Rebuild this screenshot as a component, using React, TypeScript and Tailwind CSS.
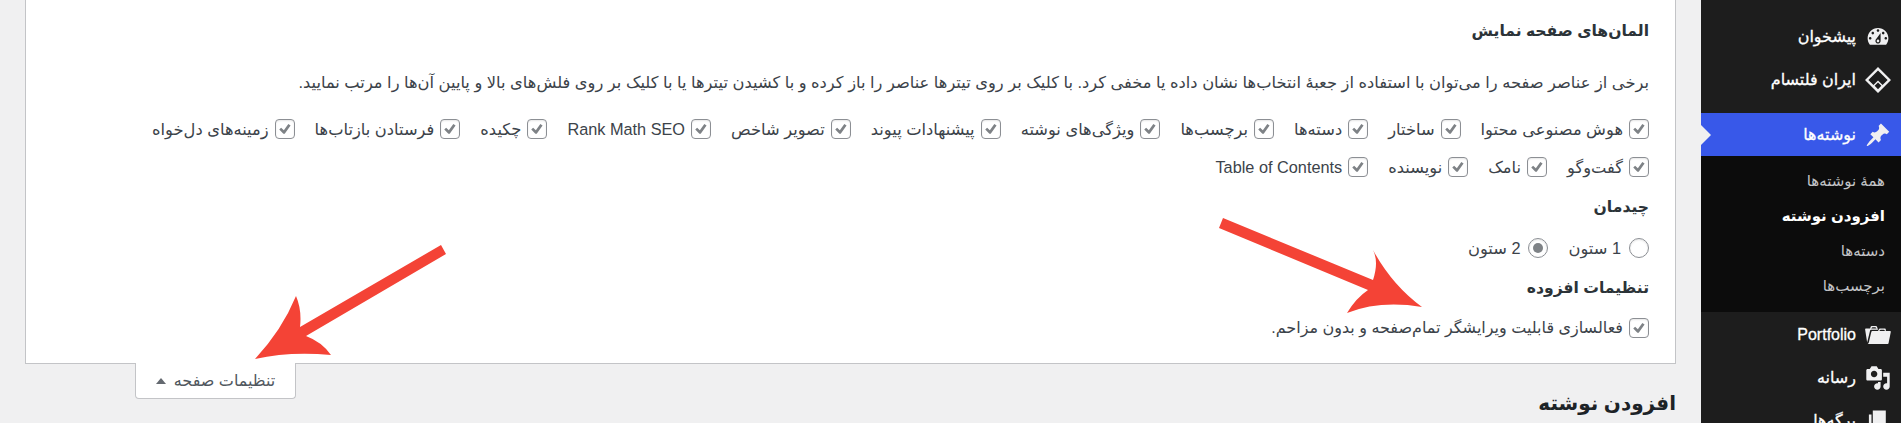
import React from 'react'

const font = "font-['Liberation_Sans','DejaVu_Sans',sans-serif]"

const rowOne = ['هوش مصنوعی محتوا', 'ساختار', 'دسته‌ها', 'برچسب‌ها', 'ویژگی‌های نوشته', 'پیشنهادات پیوند', 'تصویر شاخص', 'Rank Math SEO', 'چکیده', 'فرستادن بازتاب‌ها', 'زمینه‌های دل‌خواه']
const rowTwo = ['گفت‌وگو', 'نامک', 'نویسنده', 'Table of Contents']

const Check = ({ label }: { label: string }) => (
  <label className="flex items-center gap-[6px]">
    <span className="flex h-5 w-5 shrink-0 items-center justify-center rounded-[4px] border border-[#8c8f94] bg-white shadow-[inset_0_1px_2px_rgba(0,0,0,0.1)]">
      <svg viewBox="0 0 20 20" className="h-[18px] w-[18px] fill-[#7e8286]">
        <path d="M3.6 10.6l2.1-2 3 2.9 5-7 2.5 1.7-6.5 9.2H8.2z" />
      </svg>
    </span>
    <span>{label}</span>
  </label>
)

const Radio = ({ label, on }: { label: string; on?: boolean }) => (
  <label className="flex items-center gap-[8px]">
    <span className="flex h-5 w-5 shrink-0 items-center justify-center rounded-full border border-[#8c8f94] bg-white shadow-[inset_0_1px_2px_rgba(0,0,0,0.1)]">
      {on && <span className="h-[10px] w-[10px] rounded-full bg-[#7e8286]" />}
    </span>
    <span>{label}</span>
  </label>
)

const MenuItem = ({ label, path, active }: { label: string; path: string; active?: boolean }) => (
  <div className={`relative flex h-[43px] items-center gap-[9px] pr-[10px] text-[16px] text-white [-webkit-text-stroke:0.3px_white] ${active ? 'bg-[#3858e9]' : ''}`}>
    <svg viewBox="0 0 20 20" className="h-[26px] w-[26px] shrink-0 fill-[#f0f0f1]">
      <path d={path} />
    </svg>
    <span>{label}</span>
    {active && <span className="absolute left-0 top-[12px] h-0 w-0 border-y-[10px] border-l-[10px] border-y-transparent border-l-[#f0f0f1]" />}
  </div>
)

const icons = {
  dashboard: 'M3.76 16h12.48c1.1-1.37 1.76-3.11 1.76-5 0-4.42-3.58-8-8-8s-8 3.58-8 8c0 1.89.66 3.63 1.76 5zM10 4c.55 0 1 .45 1 1s-.45 1-1 1-1-.45-1-1 .45-1 1-1zM6 6c.55 0 1 .45 1 1s-.45 1-1 1-1-.45-1-1 .45-1 1-1zm8 0c.55 0 1 .45 1 1s-.45 1-1 1-1-.45-1-1 .45-1 1-1zm-5.37 5.55L12 7v6c0 1.1-.9 2-2 2s-2-.9-2-2c0-.57.24-1.08.63-1.45zM4 10c.55 0 1 .45 1 1s-.45 1-1 1-1-.45-1-1 .45-1 1-1zm12 0c.55 0 1 .45 1 1s-.45 1-1 1-1-.45-1-1 .45-1 1-1zm-5 3c0-.55-.45-1-1-1s-1 .45-1 1 .45 1 1 1 1-.45 1-1z',
  logo: 'M10 0l10 10-10 10L0 10zM10 2.6L2.6 10l3.9 3.9 3.5-3.5 3.5 3.5 3.9-3.9zM10 11.9l-2.6 2.6 2.6 2.6 2.6-2.6z',
  pin: 'M10.44 3.02l1.82-1.82 6.36 6.35-1.83 1.82c-1.05-.68-2.48-.57-3.41.36l-.75.75c-.92.93-1.04 2.35-.35 3.41l-1.83 1.82-2.41-2.41-2.8 2.79c-.42.42-3.38 2.71-3.8 2.29s1.86-3.39 2.28-3.81l2.79-2.79L4.1 9.36l1.83-1.82c1.05.69 2.48.57 3.4-.36l.75-.75c.93-.92 1.05-2.35.36-3.41z',
  portfolio: 'M4 5H.78c-.37 0-.74.32-.69.84l1.56 9.99S3.5 8.47 3.86 6.7c.11-.53.61-.7.98-.7H10s-.7-2.08-.77-2.31C9.11 3.25 8.89 3 8.45 3H5.14c-.36 0-.7.23-.8.64C4.26 3.99 4 5 4 5zm4.88 0h-4s.42-1 .87-1h2.13c.48 0 1 1 1 1zM2.67 16.25c-.31.47-.76.75-1.26.75h15.73c.54 0 .92-.31 1.03-.83.44-2.19 1.68-8.44 1.68-8.44.07-.5-.3-.73-.62-.73H16V5.53c0-.16-.26-.53-.66-.53h-3.76c-.52 0-.87.58-.87.58L10 7H5.59c-.32 0-.63.19-.69.5 0 0-1.59 6.7-1.72 7.33-.07.37-.22.99-.51 1.42zM15.38 7H11s.58-1 1.13-1h2.29c.71 0 .96 1 .96 1z',
  media: 'M13 11V4c0-.55-.45-1-1-1h-1.67L9 1H5L3.67 3H2c-.55 0-1 .45-1 1v7c0 .55.45 1 1 1h10c.55 0 1-.45 1-1zM7 4.5c1.38 0 2.5 1.12 2.5 2.5S8.38 9.5 7 9.5 4.5 8.38 4.5 7 5.62 4.5 7 4.5zM14 6h5v10.5c0 1.38-1.12 2.5-2.5 2.5S14 17.88 14 16.5s1.12-2.5 2.5-2.5c.17 0 .34.02.5.05V9h-3V6zm-4 8.05V13h2v3.5c0 1.38-1.12 2.5-2.5 2.5S7 17.88 7 16.5 8.12 14 9.5 14c.17 0 .34.02.5.05z',
  page: 'M6 15V2h10v13H6zm-1 1h8v2H3V5h2v11z',
}

const App = () => {
  return (
    <div dir="rtl" className={`relative flex h-[423px] w-full overflow-hidden bg-[#f0f0f1] text-[16.3px] text-[#3c434a] ${font}`}>
      <aside className="w-[200px] shrink-0 bg-[#1d1d1d] pt-[15px]">
        <MenuItem label="پیشخوان" path={icons.dashboard} />
        <MenuItem label="ایران فلتسام" path={icons.logo} />
        <div className="mt-[12px]">
          <MenuItem label="نوشته‌ها" path={icons.pin} active />
        </div>
        <ul className="flex flex-col bg-[#0c0c0c] py-[8px] pr-[16px] text-[15px] text-[#c3c4c7]">
          <li className="flex h-[35px] items-center">همهٔ نوشته‌ها</li>
          <li className="flex h-[35px] items-center font-bold text-white">افزودن نوشته</li>
          <li className="flex h-[35px] items-center">دسته‌ها</li>
          <li className="flex h-[35px] items-center">برچسب‌ها</li>
        </ul>
        <div className="pt-[1px]">
          <MenuItem label="Portfolio" path={icons.portfolio} />
          <MenuItem label="رسانه" path={icons.media} />
          <MenuItem label="برگه‌ها" path={icons.page} />
        </div>
      </aside>

      <main className="min-w-0 flex-1 px-[25px]">
        <div className="relative h-[364px] border-x border-b border-[#c3c4c7] bg-white pr-[26px] pt-[20px]">
          <h2 className="h-[22px] text-[15.6px] font-semibold leading-[22px] text-[#2c3338]">المان‌های صفحه نمایش</h2>
          <p className="mt-[29px] h-[22px] whitespace-nowrap leading-[22px]">برخی از عناصر صفحه را می‌توان با استفاده از جعبهٔ انتخاب‌ها نشان داده یا مخفی کرد. با کلیک بر روی تیترها عناصر را باز کرده و با کشیدن تیترها یا با کلیک بر روی فلش‌های بالا و پایین آن‌ها را مرتب نمایید.</p>
          <div className="mt-[26px] flex h-5 gap-[20px]">
            {rowOne.map(item => <Check key={item} label={item} />)}
          </div>
          <div className="mt-[18px] flex h-5 gap-[20px]">
            {rowTwo.map(item => <Check key={item} label={item} />)}
          </div>
          <h3 className="mt-[19px] h-[22px] text-[15.6px] font-semibold leading-[22px] text-[#2c3338]">چیدمان</h3>
          <div className="mt-[20px] flex h-5 gap-[20px]">
            <Radio label="1 ستون" />
            <Radio label="2 ستون" on />
          </div>
          <h3 className="mt-[19px] h-[22px] text-[15.6px] font-semibold leading-[22px] text-[#2c3338]">تنظیمات افزوده</h3>
          <div className="mt-[19px] flex h-5 text-[16px]">
            <Check label="فعالسازی قابلیت ویرایشگر تمام‌صفحه و بدون مزاحم." />
          </div>
        </div>
        <div className="flex items-start justify-between">
          <h1 className="mt-[24px] text-[20px] font-bold leading-[30px] text-[#1d2327]">افزودن نوشته</h1>
          <button className="ml-[110px] flex h-[36px] w-[161px] -translate-y-px items-center justify-center gap-[8px] rounded-b-[4px] border border-t-0 border-[#c3c4c7] bg-white text-[16px] text-[#50575e]">
            <span>تنظیمات صفحه</span>
            <span className="h-0 w-0 border-x-[5px] border-b-[6px] border-x-transparent border-b-[#646970]" />
          </button>
        </div>
      </main>

      {/* annotation arrows drawn over the screenshot */}
      <svg viewBox="0 0 1901 423" className="pointer-events-none absolute left-0 top-0 h-[423px] w-[1901px] fill-[#f44336]">
        <path d="M1223 218L1373 280Q1379 262 1373 250Q1392 285 1422 307Q1380 300 1347 313Q1356 298 1368 290L1219 228Z" />
        <path d="M441 245L446 254L306 336Q322 342 331 355Q290 351 255 359Q282 330 296 296Q302 310 300 327Z" />
      </svg>
    </div>
  )
}

export default App
